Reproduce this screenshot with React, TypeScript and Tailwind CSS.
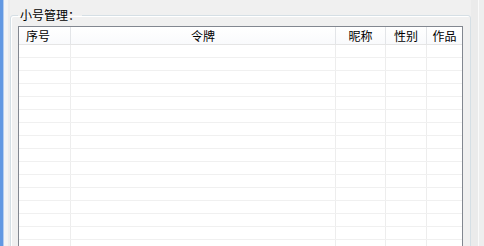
const columns = [
  { title: "序号", width: "w-[52px]", align: "justify-start pl-[7px]" },
  { title: "令牌", width: "w-[265px]", align: "justify-center" },
  { title: "昵称", width: "w-[50px]", align: "justify-center" },
  { title: "性别", width: "w-[41px]", align: "justify-center" },
  { title: "作品", width: "w-[35px]", align: "justify-center" },
]

const rows = Array.from({ length: 16 }, (_, i) => i)

export default function App() {
  return (
    <div
      className="flex h-[246px] w-[484px] overflow-hidden bg-[#f0f0f0] text-[12px] text-black"
      style={{ fontFamily: '"Noto Sans CJK SC", "Noto Sans", sans-serif' }}
    >
      {/* 左侧蓝色边条 */}
      <div className="w-[3px] shrink-0 bg-[#6298e2]" />
      <div className="w-[1px] shrink-0 bg-[#b4cdef]" />
      <div className="w-[4px] shrink-0 bg-[#f4f4f4]" />
      <div className="w-[2px] shrink-0 bg-[#ececec]" />

      {/* 分组框 */}
      <fieldset className="mt-[7px] h-[300px] w-[461px] shrink-0 rounded-[3px] border border-[#d5dfe5] shadow-[inset_1px_1px_0_#ffffff]">
        <legend className="ml-[7px] px-[2px] leading-[16px] text-[12px]">小号管理：</legend>

        {/* 列表 */}
        <div className="ml-[7px] mt-[3px] w-[445px] border border-[#828790] bg-white">
          <div className="flex h-[18px] border-b border-[#e5e5e5] bg-gradient-to-b from-white to-[#f9fafc]">
            {columns.map((c) => (
              <div
                key={c.title}
                className={`flex items-center border-r border-[#e3e5e8] last:border-r-0 ${c.width} ${c.align}`}
              >
                {c.title}
              </div>
            ))}
          </div>
          {rows.map((r) => (
            <div key={r} className="flex h-[13px] border-b border-[#f0f0f0]">
              {columns.map((c) => (
                <div key={c.title} className={`border-r border-[#ededed] last:border-r-0 ${c.width}`} />
              ))}
            </div>
          ))}
        </div>
      </fieldset>

      {/* 右侧边缘 */}
      <div className="w-[7px] shrink-0 bg-[#ebebeb]" />
      <div className="w-[1px] shrink-0 bg-[#fafafa]" />
      <div className="flex-1 bg-[#eeeeee]" />
    </div>
  )
}
